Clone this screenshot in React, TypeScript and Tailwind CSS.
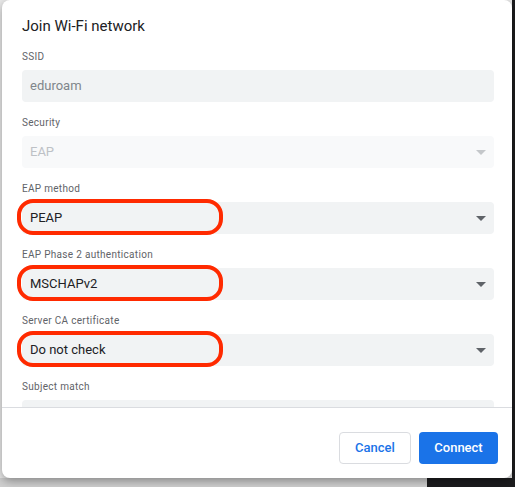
import React from 'react';

type Field = {
  label: string;
  value: string;
  kind: 'input' | 'select';
  disabled?: boolean;
  marked?: boolean;
};

const fields: Field[] = [
  { label: 'SSID', value: 'eduroam', kind: 'input' },
  { label: 'Security', value: 'EAP', kind: 'select', disabled: true },
  { label: 'EAP method', value: 'PEAP', kind: 'select', marked: true },
  { label: 'EAP Phase 2 authentication', value: 'MSCHAPv2', kind: 'select', marked: true },
  { label: 'Server CA certificate', value: 'Do not check', kind: 'select', marked: true },
  { label: 'Subject match', value: '', kind: 'input' },
];

function Arrow({ disabled }: { disabled?: boolean }) {
  return (
    <svg width="10" height="5" viewBox="0 0 10 5" className={disabled ? 'fill-[#c4c7ca]' : 'fill-[#5f6368]'}>
      <path d="M0 0h10L5 5z" />
    </svg>
  );
}

function FieldRow({ field }: { field: Field }) {
  const textColor = field.disabled
    ? 'text-[#bdc1c6]'
    : field.kind === 'input'
      ? 'text-[#80868b]'
      : 'text-[#202124]';
  return (
    <div className="flex flex-col">
      <div className="h-[12px] text-[10px] leading-[12px] tracking-[0.3px] text-[#5f6368]">{field.label}</div>
      <div
        className={`relative mt-[7px] flex h-[32px] items-center justify-between rounded-[4px] pl-[8px] pr-[8px] text-[13px] ${
          field.disabled ? 'bg-[#f8f9fa]' : 'bg-[#f1f3f4]'
        } ${textColor}`}
      >
        <span>{field.value}</span>
        {field.kind === 'select' && <Arrow disabled={field.disabled} />}
        {field.marked && (
          <div className="absolute -left-[5px] -top-[3px] h-[36px] w-[206px] rounded-[16px] border-[4px] border-[#ff2a00]" />
        )}
      </div>
    </div>
  );
}

export default function App() {
  return (
    <div className="h-[487px] w-[515px] overflow-hidden bg-[linear-gradient(to_right,#cfcfcf_427px,#1c1c1e_427px)] font-['Roboto',sans-serif]">
      <div className="flex h-[478px] w-[512px] bg-[#e9e9e9]">
        <div className="ml-[2px] flex h-[478px] w-[510px] flex-col rounded-[8px] bg-white shadow-[0_3px_10px_rgba(0,0,0,0.35)]">
          <div className="px-[20px] pt-[16px] text-[15px] leading-[20px] text-[#202124]">Join Wi-Fi network</div>
          <div className="flex flex-1 flex-col gap-[15px] overflow-hidden pl-[20px] pr-[18px] pt-[15px]">
            {fields.map((f) => (
              <FieldRow key={f.label} field={f} />
            ))}
          </div>
          <div className="flex h-[71px] justify-end gap-[8px] border-t border-[#dadce0] pr-[14px] pt-[24px]">
            <button className="h-[32px] w-[72px] rounded-[4px] border border-[#dadce0] bg-white text-[13px] font-medium text-[#1a73e8]">
              Cancel
            </button>
            <button className="h-[32px] w-[79px] rounded-[4px] bg-[#1a73e8] text-[13px] font-medium text-white">
              Connect
            </button>
          </div>
        </div>
      </div>
    </div>
  );
}
